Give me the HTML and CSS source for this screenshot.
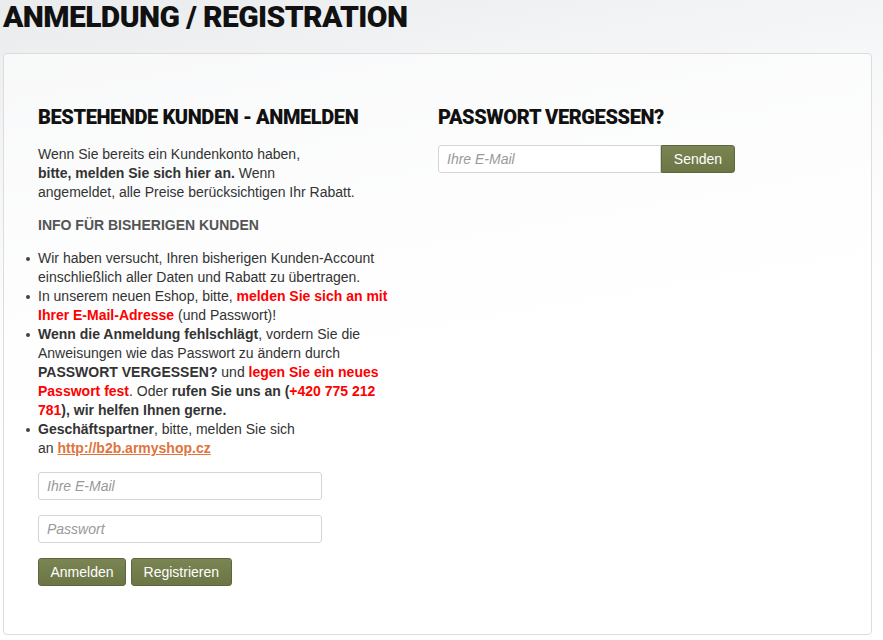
FILE: index.html
```html
<!DOCTYPE html>
<html lang="de">
<head>
    <meta charset="UTF-8">
    <meta name="viewport" content="width=device-width, initial-scale=1.0">
    <link rel="stylesheet" href="styles.css">
</head>
<body>
    <h1 class="page-title">ANMELDUNG / REGISTRATION</h1>

    <div class="login-panel">
        <div class="login-col">
            <h2 class="box-title">BESTEHENDE KUNDEN - ANMELDEN</h2>
            <p class="intro">
                Wenn Sie bereits ein Kundenkonto haben,<br>
                <b>bitte, melden Sie sich hier an.</b> Wenn<br>
                angemeldet, alle Preise berücksichtigen Ihr Rabatt.
            </p>
            <p class="info-title">INFO FÜR BISHERIGEN KUNDEN</p>
            <ul class="info-list">
                <li>Wir haben versucht, Ihren bisherigen Kunden-Account einschließlich aller Daten und Rabatt zu übertragen.</li>
                <li>In unserem neuen Eshop, bitte, <b class="red">melden Sie sich an mit Ihrer E-Mail-Adresse</b> (und Passwort)!</li>
                <li><b>Wenn die Anmeldung fehlschlägt</b>, vordern Sie die Anweisungen wie das Passwort zu ändern durch <b>PASSWORT VERGESSEN?</b> und <b class="red">legen Sie ein neues Passwort fest</b>. Oder <b>rufen Sie uns an (<span class="red">+420 775 212 781</span>), wir helfen Ihnen gerne.</b></li>
                <li><b>Geschäftspartner</b>, bitte, melden Sie sich<br>an <a href="#">http://b2b.armyshop.cz</a></li>
            </ul>

            <form class="login-form">
                <input type="text" class="field" placeholder="Ihre E-Mail">
                <input type="password" class="field" placeholder="Passwort">
                <div class="btn-row">
                    <button type="button" class="btn">Anmelden</button>
                    <button type="button" class="btn">Registrieren</button>
                </div>
            </form>
        </div>

        <div class="forgot-col">
            <h2 class="box-title">PASSWORT VERGESSEN?</h2>
            <div class="input-group">
                <input type="text" class="field" placeholder="Ihre E-Mail">
                <button type="button" class="btn btn-addon">Senden</button>
            </div>
        </div>
    </div>
</body>
</html>
```

FILE: styles.css
```css
body {
    margin: 0;
    padding: 0 11px 4px 3px;
    font-family: "Liberation Sans", Arial, sans-serif;
    font-size: 14px;
    color: #333;
    background: linear-gradient(170deg, #e9ebed 0%, #f6f7f8 25%, #fdfdfd 45%, #fff 70%);
    min-height: 640px;
    box-sizing: border-box;
}

.page-title {
    margin: 0;
    padding: 0;
    height: 53px;
    line-height: 34px;
    font-family: Roboto, sans-serif;
    font-weight: 900;
    font-size: 30px;
    letter-spacing: -0.6px;
    color: #111;
}

.login-panel {
    display: grid;
    grid-template-columns: 350px 1fr;
    column-gap: 50px;
    padding: 49px 35px 48px 34px;
    border: 1px solid #ddd;
    border-radius: 4px;
    background: rgba(255, 255, 255, 0.6);
}

.box-title {
    margin: 0 0 14px 0;
    font-family: Roboto, sans-serif;
    font-weight: 900;
    font-size: 20px;
    letter-spacing: -0.4px;
    line-height: 28px;
    color: #111;
}

.intro {
    margin: 0 0 14px 0;
    line-height: 19px;
}

.info-title {
    margin: 0 0 14px 0;
    font-weight: bold;
    color: #555;
    line-height: 19px;
}

.info-list {
    margin: 0 0 14px 0;
    padding-left: 0;
    list-style: none;
    line-height: 19px;
}

.info-list li {
    position: relative;
}

.info-list li::before {
    content: "";
    position: absolute;
    left: -12px;
    top: 8px;
    width: 4px;
    height: 4px;
    border-radius: 50%;
    background: #444;
}

.red {
    color: #f00;
    font-weight: bold;
}

.info-list a {
    color: #e0743c;
    font-weight: bold;
}

.login-form {
    display: flex;
    flex-direction: column;
    gap: 15px;
    width: 284px;
}

.field {
    box-sizing: border-box;
    height: 28px;
    width: 100%;
    padding: 4px 8px;
    border: 1px solid #d5d5d5;
    border-radius: 3px;
    background: #fff;
    font-family: "Liberation Sans", Arial, sans-serif;
    font-size: 14px;
    color: #333;
}

.field::placeholder {
    color: #999;
    font-style: italic;
}

.btn-row {
    display: flex;
    gap: 5px;
}

.btn {
    height: 28px;
    padding: 0 11.5px;
    border: 1px solid #5d673d;
    border-radius: 3px;
    background: linear-gradient(#7a8553, #6b7545);
    color: #fff;
    font-family: "Liberation Sans", Arial, sans-serif;
    font-size: 14px;
    cursor: pointer;
}

.input-group {
    display: flex;
    width: 297px;
}

.input-group .field {
    width: 223px;
    border-radius: 3px 0 0 3px;
}

.btn-addon {
    width: 74px;
    border-radius: 0 3px 3px 0;
}
```
